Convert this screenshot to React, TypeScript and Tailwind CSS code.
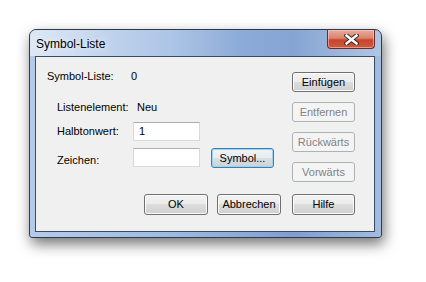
import React from 'react'

const font = { fontFamily: '"Liberation Sans", Arial, sans-serif' }

function Button({ label, disabled, focused, className = '' }: { label: string; disabled?: boolean; focused?: boolean; className?: string }) {
  let look =
    'border-[#707070] text-black bg-[linear-gradient(#f2f2f2_0%,#ebebeb_50%,#dddddd_50%,#cfcfcf_100%)] shadow-[inset_0_0_0_1px_#fcfcfc]'
  if (disabled) {
    look = 'border-[#adb2b5] text-[#838383] bg-[#f4f4f4]'
  } else if (focused) {
    look =
      'border-[#3c7fb1] text-black bg-[linear-gradient(#f0f3f5_0%,#e8ecef_50%,#d9dfe3_50%,#ccd3d8_100%)] shadow-[inset_0_0_0_1px_#9fd4f0]'
  }
  return (
    <div className={`flex items-center justify-center rounded-[3px] border text-[11px] leading-none ${look} ${className}`}>
      {label}
    </div>
  )
}

function TextBox({ value }: { value?: string }) {
  return (
    <div className="flex h-[19px] w-[67px] items-center border border-[#d5d9e0] border-t-[#abadb3] bg-white pl-[5px] text-[11px]">
      {value}
    </div>
  )
}

function CloseButton() {
  return (
    <div className="flex h-[19px] w-[48px] items-center justify-center rounded-b-[4px] border border-t-0 border-[#6e2b22] bg-[linear-gradient(#e9a99b_0%,#d98672_45%,#c8432b_55%,#cf5a3c_100%)] shadow-[inset_0_0_0_1px_rgba(255,220,210,0.5)]">
      <svg width="15" height="11" viewBox="0 0 15 11">
        <path d="M2.5 1.5 L12.5 9.5 M12.5 1.5 L2.5 9.5" stroke="#3b2a2a" strokeWidth="4.4" strokeLinecap="square" />
        <path d="M2.5 1.5 L12.5 9.5 M12.5 1.5 L2.5 9.5" stroke="#ffffff" strokeWidth="2.4" strokeLinecap="square" />
      </svg>
    </div>
  )
}

export default function App() {
  return (
    <div className="h-[282px] w-[426px] bg-white pl-[29px] pt-[29px]" style={font}>
      <div className="flex h-[209px] w-[353px] flex-col rounded-t-[7px] rounded-b-[3px] border border-[#2e3b4d] bg-[linear-gradient(90deg,#b4cbea_0%,#9fbbe2_40%,#7e9fd0_75%,#a2bce1_100%)] shadow-[2px_6px_14px_rgba(0,0,0,0.55)]">
        {/* Title bar */}
        <div className="flex h-[26px] shrink-0 items-start justify-between rounded-t-[6px] bg-[linear-gradient(90deg,rgba(255,255,255,0.55)_0%,rgba(255,255,255,0.25)_25%,rgba(255,255,255,0)_60%,rgba(255,255,255,0.15)_100%)] pr-[6px]">
          <span className="pl-[6px] pt-[8px] text-[12px] leading-none text-black [text-shadow:0_0_6px_#ffffff]">
            Symbol-Liste
          </span>
          <CloseButton />
        </div>

        {/* Frame and client area */}
        <div className="flex flex-1 pb-[5px] pl-[5px] pr-[6px]">
          <div className="flex flex-1 flex-col border border-[#3d4b5e] bg-[#f0f0f0] pr-[19px] pt-[12px] text-[11px] text-black">
            <div className="flex h-[125px]">
              <div className="flex flex-1 flex-col">
                <div className="flex h-[14px] items-center pl-[11px]">
                  <span className="w-[84px]">Symbol-Liste:</span>
                  <span>0</span>
                </div>
                <div className="mt-[17px] flex h-[14px] items-center pl-[21px]">
                  <span className="w-[80px]">Listenelement:</span>
                  <span>Neu</span>
                </div>
                <div className="mt-[8px] flex items-center pl-[21px]">
                  <span className="w-[76px]">Halbtonwert:</span>
                  <TextBox value="1" />
                </div>
                <div className="mt-[7px] flex items-start pl-[21px]">
                  <span className="mt-[4px] w-[76px]">Zeichen:</span>
                  <TextBox />
                  <Button label="Symbol..." focused className="ml-[11px] h-[20px] w-[63px]" />
                </div>
              </div>
              <div className="mt-[3px] flex w-[63px] flex-col gap-[10px]">
                <Button label="Einfügen" className="h-[20px]" />
                <Button label="Entfernen" disabled className="h-[20px]" />
                <Button label="Rückwärts" disabled className="h-[20px]" />
                <Button label="Vorwärts" disabled className="h-[20px]" />
              </div>
            </div>
            <div className="flex pl-[108px]">
              <Button label="OK" className="h-[21px] w-[64px]" />
              <Button label="Abbrechen" className="ml-[9px] h-[21px] w-[64px]" />
              <Button label="Hilfe" className="ml-[11px] h-[21px] w-[63px]" />
            </div>
          </div>
        </div>
      </div>
    </div>
  )
}
